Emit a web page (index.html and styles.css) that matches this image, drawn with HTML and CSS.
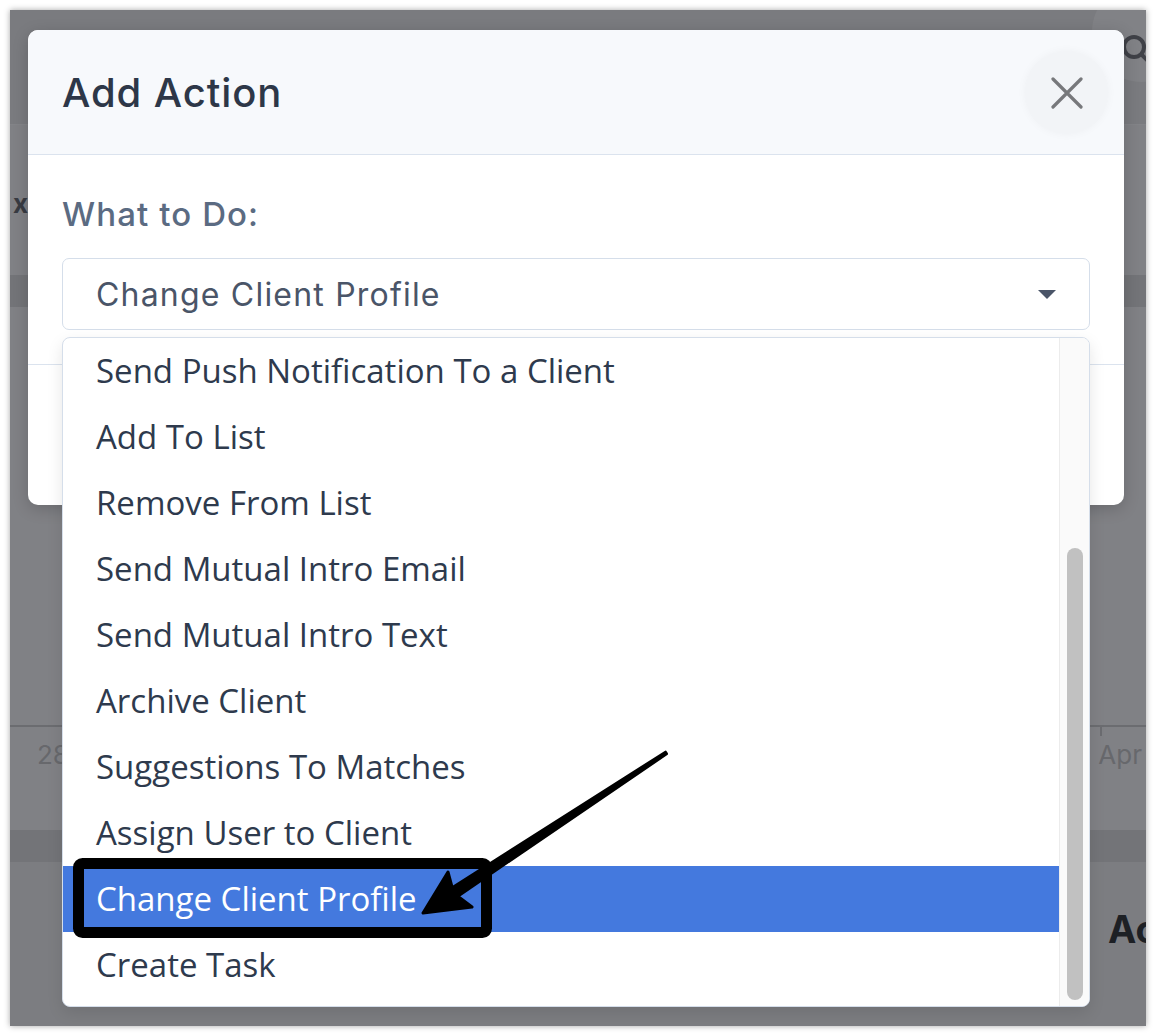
FILE: index.html
```html
<!DOCTYPE html>
<html>
<head>
<meta charset="utf-8">
<link rel="stylesheet" href="styles.css">
</head>
<body>
<div class="frame">
  <div class="backdrop">
    <div class="bg-top">
      <div class="bg-search">
        <svg width="34" height="34" viewBox="0 0 34 34"><circle cx="14" cy="14" r="10" fill="none" stroke="#3f4147" stroke-width="4"/><line x1="21.5" y1="21.5" x2="30" y2="30" stroke="#3f4147" stroke-width="4" stroke-linecap="round"/></svg>
      </div>
    </div>
    <div class="bg-row"><span class="bg-x">x</span></div>
    <div class="bg-band"></div>
    <div class="bg-chart">
      <div class="bg-axis"><span class="bg-tick"></span></div>
      <div class="bg-labels"><span class="bg-lbl">28</span><span class="bg-lbl">Apr</span></div>
    </div>
    <div class="bg-band"></div>
    <div class="bg-bottom"><span class="bg-ac">Ac</span></div>
  </div>

  <div class="modal-layer">
    <div class="modal">
      <div class="modal-header">
        <h2 class="modal-title">Add Action</h2>
        <button class="close-btn" type="button">
          <svg width="32" height="32" viewBox="0 0 32 32"><path d="M2 2 L30 30 M30 2 L2 30" stroke="#77787b" stroke-width="3.2" stroke-linecap="round" fill="none"/></svg>
        </button>
      </div>
      <div class="modal-body">
        <div class="field-label">What to Do:</div>
        <div class="select-wrap">
          <div class="select">
            <span class="select-value">Change Client Profile</span>
            <span class="caret"></span>
          </div>
          <div class="dropdown">
            <ul class="options">
              <li class="option">Send Push Notification To a Client</li>
              <li class="option">Add To List</li>
              <li class="option">Remove From List</li>
              <li class="option">Send Mutual Intro Email</li>
              <li class="option">Send Mutual Intro Text</li>
              <li class="option">Archive Client</li>
              <li class="option">Suggestions To Matches</li>
              <li class="option">Assign User to Client</li>
              <li class="option selected">Change Client Profile</li>
              <li class="option">Create Task</li>
            </ul>
            <div class="scroll-track"><div class="scroll-thumb"></div></div>
          </div>
        </div>
      </div>
      <div class="modal-footer"></div>
    </div>
  </div>

  <svg class="annotation" width="1136" height="1016" viewBox="0 0 1136 1016">
    <rect x="68.5" y="853.5" width="408" height="69" rx="4" ry="4" fill="none" stroke="#000" stroke-width="11"/>
    <polygon points="656.5,743.8 447.75,886.2 462,897 413,903 438,862 442.25,877.8 655.5,742.2" fill="#000" stroke="#000" stroke-width="3" stroke-linejoin="round"/>
  </svg>
</div>
</body>
</html>
```

FILE: styles.css
```css
* { box-sizing: border-box; }
html, body { margin: 0; padding: 0; background: #ffffff; }
body { width: 1156px; height: 1036px; overflow: hidden; }

.frame {
  position: relative;
  margin: 10px;
  width: 1136px;
  height: 1016px;
  overflow: hidden;
  background: #7e7f83;
  box-shadow: 0 0 6px rgba(0, 0, 0, 0.35);
}

/* ---------- dimmed background page ---------- */
.backdrop {
  display: flex;
  flex-direction: column;
  height: 100%;
  font-family: "Inter", "Liberation Sans", sans-serif;
}
.bg-top {
  height: 115px;
  background: #7a7b7f;
  border-bottom: 1px solid #838488;
  display: flex;
  justify-content: flex-end;
}
.bg-search {
  width: 100px;
  height: 100px;
  border-radius: 50%;
  margin-top: -28px;
  margin-right: -46px;
  background: #818286;
  display: flex;
  align-items: center;
  padding-left: 28px;
  padding-top: 36px;
}
.bg-row {
  height: 150px;
  padding-top: 66px;
  background: #808185;
}
.bg-x {
  display: block;
  margin-left: 3px;
  font-size: 26px;
  font-weight: 700;
  line-height: 26px;
  color: #383b42;
}
.bg-band {
  height: 32px;
  background: #737478;
}
.bg-chart {
  height: 523px;
  background: #808185;
  padding-top: 418px;
}
.bg-axis {
  height: 2px;
  background: #6b6c70;
  display: flex;
  justify-content: flex-end;
}
.bg-tick {
  width: 2px;
  height: 11px;
  background: #6b6c70;
  margin-right: 44px;
}
.bg-labels {
  display: flex;
  justify-content: space-between;
  padding: 12px 4px 0 27px;
  font-size: 26px;
  color: #67686c;
}
.bg-bottom {
  flex: 1;
  background: #7c7d81;
  display: flex;
  justify-content: flex-end;
  padding-top: 47px;
  overflow: hidden;
}
.bg-ac {
  font-size: 38px;
  font-weight: 700;
  line-height: 40px;
  height: 40px;
  width: 38px;
  overflow: hidden;
  white-space: nowrap;
  color: #1d2025;
}

/* ---------- modal ---------- */
.modal-layer {
  position: absolute;
  inset: 0;
  padding: 20px 0 0 18px;
}
.modal {
  width: 1096px;
  height: 475px;
  background: #ffffff;
  border-radius: 10px;
  box-shadow: 0 4px 16px rgba(0, 0, 0, 0.18);
  display: flex;
  flex-direction: column;
  font-family: "Inter", "Liberation Sans", sans-serif;
}
.modal-header {
  height: 125px;
  flex: none;
  background: #f7f9fc;
  border-bottom: 1px solid #dbe3ee;
  border-radius: 10px 10px 0 0;
  display: flex;
  align-items: center;
  justify-content: space-between;
  padding: 0 16px 0 34px;
}
.modal-title {
  margin: 0;
  font-size: 40px;
  font-weight: 500;
  color: #2d3748;
  letter-spacing: 0.9px;
}
.close-btn {
  width: 83px;
  height: 83px;
  border: none;
  border-radius: 50%;
  background: #f2f4f7;
  box-shadow: 0 0 10px rgba(0, 0, 0, 0.04);
  display: flex;
  align-items: center;
  justify-content: center;
  padding: 0;
  margin-top: 1px;
}
.close-btn svg { display: block; }

.modal-body {
  flex: none;
  height: 209px;
  padding: 34px 34px 34px;
}
.field-label {
  font-size: 33px;
  line-height: 50px;
  font-weight: 500;
  color: #5b6b82;
  margin-bottom: 19px;
  letter-spacing: 1.1px;
}
.select-wrap { position: relative; }
.select {
  height: 72px;
  border: 1px solid #d5deea;
  border-radius: 7px;
  display: flex;
  align-items: center;
  justify-content: space-between;
  padding: 0 33px 0 33px;
  background: #fff;
}
.select-value {
  font-size: 32px;
  color: #4a5568;
  letter-spacing: 1.2px;
}
.caret {
  width: 0;
  height: 0;
  border-left: 9px solid transparent;
  border-right: 9px solid transparent;
  border-top: 9px solid #4a5568;
}

.dropdown {
  position: absolute;
  top: 79px;
  left: 0;
  right: 0;
  height: 670px;
  background: #ffffff;
  border: 1px solid #d5deea;
  border-radius: 8px;
  box-shadow: 0 6px 16px rgba(0, 0, 0, 0.10);
  overflow: hidden;
  display: flex;
  z-index: 2;
}
.options {
  list-style: none;
  margin: 0;
  padding: 0;
  flex: 1;
}
.option {
  height: 66px;
  line-height: 66px;
  padding-left: 33px;
  font-family: "Open Sans", "Noto Sans", sans-serif;
  font-size: 33px;
  color: #2e3a4d;
  white-space: nowrap;
}
.option.selected {
  background: #4479de;
  color: #ffffff;
}
.scroll-track {
  width: 30px;
  flex: none;
  background: #fafafa;
  border-left: 1px solid #ececec;
  padding: 210px 0 0 7px;
}
.scroll-thumb {
  width: 16px;
  height: 452px;
  border-radius: 8px;
  background: #c1c1c1;
}

.modal-footer {
  flex: 1;
  border-top: 1px solid #dbe3ee;
}

/* ---------- annotation ---------- */
.annotation {
  position: absolute;
  left: 0;
  top: 0;
  z-index: 5;
  pointer-events: none;
}
```
